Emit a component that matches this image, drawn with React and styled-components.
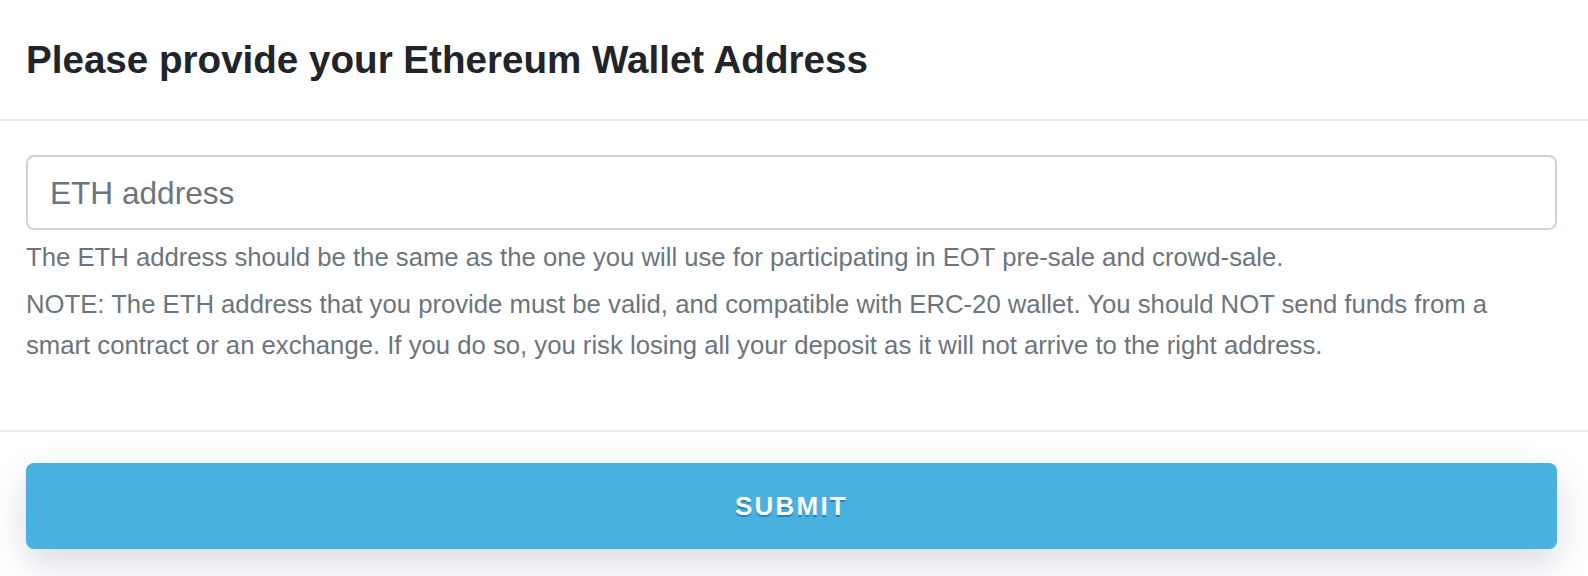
import React, { Component } from "react";
import styled, { createGlobalStyle } from "styled-components";

const GlobalStyle = createGlobalStyle`
  html, body {
    margin: 0;
    padding: 0;
    background: #ffffff;
  }
  body {
    font-family: "Liberation Sans", Arial, sans-serif;
    -webkit-font-smoothing: antialiased;
  }
  * {
    box-sizing: border-box;
  }
`;

const StyledPanel = styled.div`
  display: flex;
  flex-direction: column;
  width: 100%;
  height: 576px;
  overflow: hidden;
  background: #ffffff;
`;

const StyledHeader = styled.div`
  display: flex;
  flex-shrink: 0;
  align-items: center;
  height: 121px;
  padding: 0 26px;
  border-bottom: 2px solid #e9ecef;
`;

const StyledTitle = styled.h1`
  margin: 0;
  font-size: 38.6px;
  line-height: 46px;
  font-weight: 700;
  color: #212529;
`;

const StyledBody = styled.div`
  display: flex;
  flex-shrink: 0;
  flex-direction: column;
  padding: 34px 31px 0 26px;
  height: 309px;
`;

const StyledInput = styled.input`
  width: 100%;
  height: 75px;
  padding: 2px 22px 0;
  border: 2px solid #ced4da;
  border-radius: 8px;
  outline: none;
  font-family: "Liberation Sans", Arial, sans-serif;
  font-size: 31.6px;
  color: #495057;
  background: #ffffff;
  &::placeholder {
    color: #6c757d;
    opacity: 1;
  }
`;

const StyledHint = styled.p`
  margin: ${({ first }) => (first ? "7px" : "6px")} 0 0;
  padding-right: 40px;
  font-size: 25.7px;
  line-height: 41px;
  color: #6c757d;
`;

const StyledFooter = styled.div`
  display: flex;
  flex-shrink: 0;
  padding: 31px 31px 32px 26px;
  border-top: 2px solid #e9ecef;
`;

const StyledButton = styled.button`
  width: 100%;
  height: 86px;
  border: none;
  border-radius: 8px;
  background-color: #49b1df;
  color: #ffffff;
  font-family: "Liberation Sans", Arial, sans-serif;
  font-size: 26px;
  font-weight: 700;
  letter-spacing: 2.2px;
  text-transform: uppercase;
  text-shadow: 0 2px 0 rgba(25, 100, 150, 0.6);
  box-shadow: 0 14px 36px rgba(40, 50, 90, 0.18);
  cursor: pointer;
  outline: none;
`;

class App extends Component {
  state = {
    address: "",
  };

  handleAddress = (e) => {
    this.setState({
      address: e.target.value,
    });
  };

  render() {
    return (
      <>
        <GlobalStyle />
        <StyledPanel>
          <StyledHeader>
            <StyledTitle>Please provide your Ethereum Wallet Address</StyledTitle>
          </StyledHeader>
          <StyledBody>
            <StyledInput
              type="text"
              placeholder="ETH address"
              value={this.state.address}
              onChange={this.handleAddress}
            />
            <StyledHint first>
              The ETH address should be the same as the one you will use for
              participating in EOT pre-sale and crowd-sale.
            </StyledHint>
            <StyledHint>
              NOTE: The ETH address that you provide must be valid, and
              compatible with ERC-20 wallet. You should NOT send funds from a
              smart contract or an exchange. If you do so, you risk losing all
              your deposit as it will not arrive to the right address.
            </StyledHint>
          </StyledBody>
          <StyledFooter>
            <StyledButton>Submit</StyledButton>
          </StyledFooter>
        </StyledPanel>
      </>
    );
  }
}

export default App;
